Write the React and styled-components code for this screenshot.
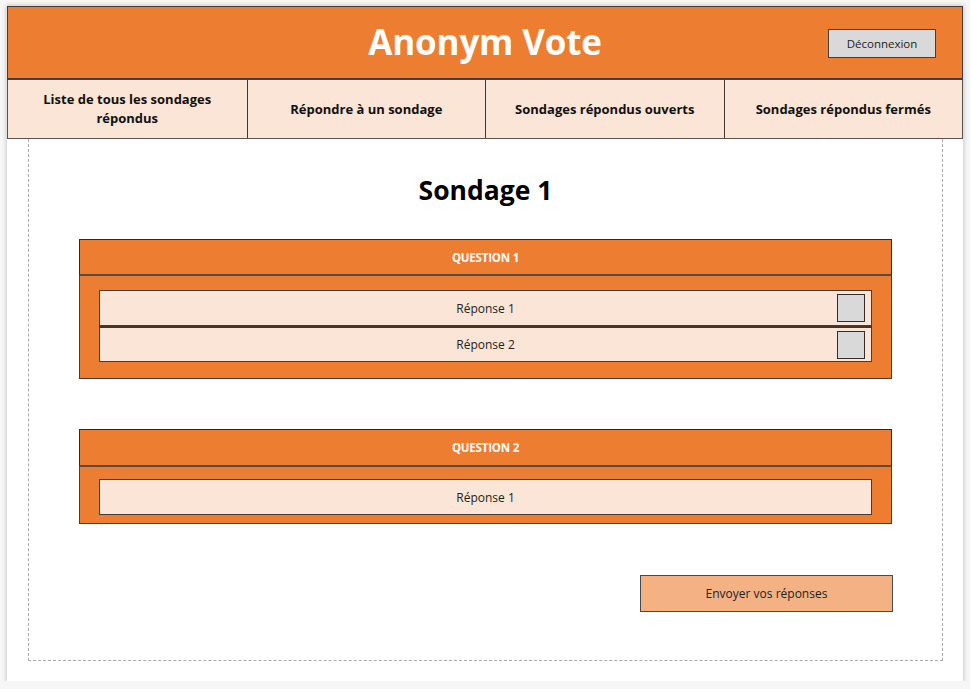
import React from "react";
import styled, { createGlobalStyle } from "styled-components";

const Global = createGlobalStyle`
  html, body { margin: 0; padding: 0; background: #f6f6f6; }
  body { font-family: "Open Sans", "Liberation Sans", sans-serif; }
  * { box-sizing: border-box; }
`;

const Card = styled.div`
  margin: 6px 0 0 7px;
  width: 956px;
  height: 675px;
  background: #fff;
  box-shadow: 0 0 4px 1px rgba(0,0,0,0.18);
  display: flex;
  flex-direction: column;
`;

const Header = styled.header`
  height: 74px;
  background: #ed7d31;
  border: 1px solid #3f3f3f;
  border-bottom: 2px solid #404040;
  display: flex;
  align-items: center;
  justify-content: center;
  position: relative;
`;

const Title = styled.h1`
  margin: 0 0 2px;
  color: #fff;
  font-size: 35px;
  font-weight: 700;
  letter-spacing: -0.2px;
`;

const LogoutButton = styled.button`
  position: absolute;
  right: 26px;
  top: 22px;
  width: 108px;
  height: 29px;
  background: #d9d9d9;
  border: 1px solid #404040;
  font-family: "Open Sans", sans-serif;
  font-size: 11.5px;
  color: #222;
  padding: 0;
`;

const Nav = styled.nav`
  display: grid;
  grid-template-columns: repeat(4, 1fr);
  height: 59px;
  border: 1px solid #555;
  border-top: none;
`;

const NavItem = styled.div`
  background: #fbe5d6;
  display: flex;
  align-items: center;
  justify-content: center;
  text-align: center;
  font-weight: 700;
  font-size: 13px;
  line-height: 19px;
  color: #111;
  padding: 0 24px;
  border-left: ${p => (p.$first ? "none" : "1px solid #3a3a3a")};
`;

const Content = styled.main`
  flex: 1;
  margin: 0 20px 20px 21px;
  border: 1px dashed #aaa;
  border-top: none;
  display: flex;
  flex-direction: column;
  align-items: center;
`;

const PollTitle = styled.h2`
  margin: 34px 0 0;
  font-size: 26.5px;
  font-weight: 700;
  color: #000;
  line-height: 34px;
`;

const Question = styled.section`
  width: 813px;
  margin-top: ${p => p.$mt}px;
  display: flex;
  flex-direction: column;
`;

const QuestionHead = styled.div`
  height: ${p => p.$h}px;
  background: #ed7d31;
  border: 1px solid #2a2a2a;
  border-bottom: 2px solid #5a4a40;
  display: flex;
  align-items: center;
  justify-content: center;
  color: #fff;
  font-size: 11.5px;
  font-weight: 700;
  letter-spacing: -0.2px;
`;

const QuestionBody = styled.div`
  background: #ed7d31;
  border: 1px solid #4a3a30;
  border-top: none;
  padding: ${p => p.$pad};
  display: flex;
  flex-direction: column;
`;

const Answer = styled.div`
  height: 36px;
  background: #fbe5d6;
  border: 1px solid #4a3a30;
  border-top: ${p => (p.$first ? "1px solid #4a3a30" : "2px solid #4a3226")};
  display: flex;
  align-items: center;
  justify-content: center;
  position: relative;
  font-size: 12px;
  color: #222;
`;

const Check = styled.span`
  position: absolute;
  right: 6px;
  top: 50%;
  transform: translateY(-50%);
  width: 28px;
  height: 28px;
  background: #d9d9d9;
  border: 1px solid #2e2e2e;
`;

const SubmitRow = styled.div`
  align-self: stretch;
  display: flex;
  justify-content: flex-end;
  padding-right: 49px;
  margin-top: 51px;
`;

const Submit = styled.button`
  width: 253px;
  height: 37px;
  background: #f4b183;
  border: 1px solid #4a4a4a;
  font-family: "Open Sans", sans-serif;
  font-size: 12px;
  color: #222;
`;

export default function App() {
  const navs = [
    "Liste de tous les sondages répondus",
    "Répondre à un sondage",
    "Sondages répondus ouverts",
    "Sondages répondus fermés",
  ];
  return (
    <>
      <Global />
      <Card>
        <Header>
          <Title>Anonym Vote</Title>
          <LogoutButton>Déconnexion</LogoutButton>
        </Header>
        <Nav>
          {navs.map((n, i) => (
            <NavItem key={n} $first={i === 0}>{n}</NavItem>
          ))}
        </Nav>
        <Content>
          <PollTitle>Sondage 1</PollTitle>
          <Question $mt={32}>
            <QuestionHead $h={37}>QUESTION 1</QuestionHead>
            <QuestionBody $pad="14px 19px 16px 19px">
              <Answer $first>Réponse 1<Check /></Answer>
              <Answer>Réponse 2<Check /></Answer>
            </QuestionBody>
          </Question>
          <Question $mt={50}>
            <QuestionHead $h={38}>QUESTION 2</QuestionHead>
            <QuestionBody $pad="12px 19px 8px 19px">
              <Answer $first>Réponse 1</Answer>
            </QuestionBody>
          </Question>
          <SubmitRow>
            <Submit>Envoyer vos réponses</Submit>
          </SubmitRow>
        </Content>
      </Card>
    </>
  );
}
